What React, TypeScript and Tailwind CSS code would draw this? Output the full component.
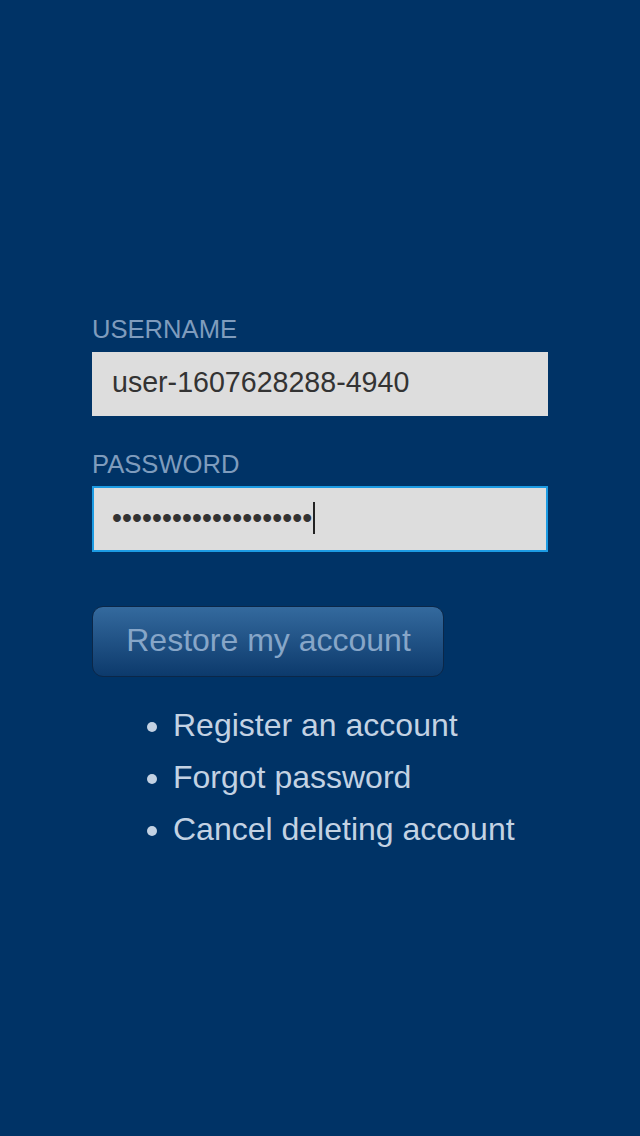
import React from "react";

const links = ["Register an account", "Forgot password", "Cancel deleting account"];

export default function App() {
  return (
    <div
      className="min-h-[1136px] w-full bg-[#003366] pt-[314px] pl-[92px]"
      style={{ fontFamily: '"Liberation Sans", Arial, sans-serif' }}
    >
      <div className="w-[456px]">
        {/* Username */}
        <label className="block h-[30px] text-[25.6px] leading-[30px] text-[#7f9cbd] uppercase">
          Username
        </label>
        <div className="mt-[8px] flex h-[64px] items-center border-2 border-[#dddddd] bg-[#dddddd] pb-[3px] pl-[18px] text-[28.6px] text-[#333333]">
          user-1607628288-4940
        </div>

        {/* Password */}
        <label className="mt-[33px] block h-[30px] text-[25.6px] leading-[30px] text-[#7f9cbd] uppercase">
          Password
        </label>
        <div className="mt-[7px] flex h-[66px] items-center border-2 border-[#1c9be3] bg-[#dddddd] pb-[2px] pl-[18px] text-[28.6px] text-[#333333]">
          <span>{"\u2022".repeat(20)}</span>
          <span className="ml-[1px] inline-block h-[32px] w-[2px] bg-[#222222]" />
        </div>
      </div>

      {/* Submit */}
      <button className="mt-[54px] flex h-[71px] w-[352px] items-center justify-center rounded-[11px] border border-[#0b2748] bg-gradient-to-b from-[#346a9e] to-[#0c3a6c] pb-[3px] pl-[1px] text-[32px] text-[#87a6c8]">
        Restore my account
      </button>

      <ul className="mt-[22px] list-disc pl-[81px] text-[32px] leading-[52px] text-[#c3d2e3] marker:text-[#c3d2e3]">
        {links.map((l) => (
          <li key={l}>{l}</li>
        ))}
      </ul>
    </div>
  );
}
